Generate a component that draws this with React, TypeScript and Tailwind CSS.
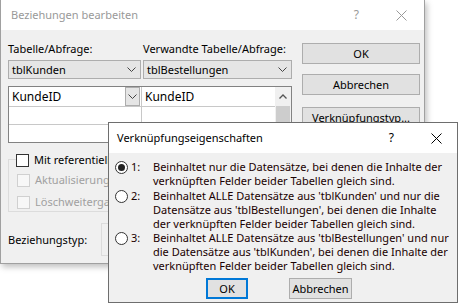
import React from "react";

const font = { fontFamily: '"Noto Sans", "Open Sans", sans-serif' };

function Chevron({ className = "" }: { className?: string }) {
  return (
    <svg width="9" height="6" viewBox="0 0 9 6" className={className}>
      <path d="M0.5 0.5 L4.5 4.5 L8.5 0.5" fill="none" stroke="#444" strokeWidth="1" />
    </svg>
  );
}

function CloseX({ color = "#000" }: { color?: string }) {
  return (
    <svg width="11" height="11" viewBox="0 0 11 11">
      <path d="M0.5 0.5 L10.5 10.5 M10.5 0.5 L0.5 10.5" stroke={color} strokeWidth="1" fill="none" />
    </svg>
  );
}

function Radio({ checked }: { checked?: boolean }) {
  return (
    <div className="w-[13px] h-[13px] rounded-full border border-[#333] bg-white flex items-center justify-center shrink-0">
      {checked && <div className="w-[7px] h-[7px] rounded-full bg-[#222]" />}
    </div>
  );
}

function Btn({ children, className = "" }: { children: React.ReactNode; className?: string }) {
  return (
    <div className={`h-[21px] border border-[#adadad] bg-[#e1e1e1] flex items-center justify-center text-black whitespace-nowrap ${className}`}>
      {children}
    </div>
  );
}

const options = [
  { n: "1:", c: true, t: ["Beinhaltet nur die Datensätze, bei denen die Inhalte der", "verknüpften Felder beider Tabellen gleich sind."] },
  { n: "2:", c: false, t: ["Beinhaltet ALLE Datensätze aus 'tblKunden' und nur die", "Datensätze aus 'tblBestellungen', bei denen die Inhalte", "der verknüpften Felder beider Tabellen gleich sind."] },
  { n: "3:", c: false, t: ["Beinhaltet ALLE Datensätze aus 'tblBestellungen' und nur", "die Datensätze aus 'tblKunden', bei denen die Inhalte der", "verknüpften Felder beider Tabellen gleich sind."] },
];

export default function App() {
  return (
    <div className="relative w-[459px] h-[303px] bg-white overflow-hidden text-[11px] leading-[14px] text-black" style={font}>
      {/* Background dialog */}
      <div className="w-[425px] h-[264px] border border-[#a0a0a0] border-t-0 bg-[#f0f0f0] shadow-[2px_3px_6px_rgba(0,0,0,0.25)] flex flex-col">
        <div className="h-[30px] bg-white flex items-center pl-[10px] pr-[17px] shrink-0">
          <span className="text-[#999] flex-1">Beziehungen bearbeiten</span>
          <span className="text-[#999] text-[12px] mr-[37px]">?</span>
          <CloseX color="#999" />
        </div>
        <div className="flex pl-[7px] pt-[12px]">
          {/* left column */}
          <div className="w-[284px] flex flex-col">
            <div className="flex h-[14px] whitespace-nowrap">
              <span className="w-[135px]">Tabelle/Abfrage:</span>
              <span>Verwandte Tabelle/Abfrage:</span>
            </div>
            <div className="flex mt-[4px] h-[19px] gap-[2px]">
              <div className="w-[133px] border border-[#adadad] bg-[#e5e5e5] flex items-center px-[3px]">
                <span className="flex-1">tblKunden</span>
                <Chevron className="mr-[1px]" />
              </div>
              <div className="w-[149px] border border-[#adadad] bg-[#e5e5e5] flex items-center px-[3px]">
                <span className="flex-1">tblBestellungen</span>
                <Chevron className="mr-[1px]" />
              </div>
            </div>
            {/* grid */}
            <div className="mt-[7px] h-[57px] border border-[#828282] bg-white flex">
              <div className="flex-1 flex flex-col">
                <div className="flex h-[20px] border-b border-[#c8c8c8]">
                  <div className="w-[133px] border-r border-[#c8c8c8] flex items-center pl-[3px] text-[12px]">
                    <span className="flex-1">KundeID</span>
                    <div className="w-[15px] h-[19px] border border-[#adadad] bg-[#e5e5e5] flex items-center justify-center mr-[1px]">
                      <Chevron />
                    </div>
                  </div>
                  <div className="flex-1 flex items-center pl-[3px] text-[12px]">KundeID</div>
                </div>
                <div className="flex h-[18px] border-b border-[#c8c8c8]">
                  <div className="w-[133px] border-r border-[#c8c8c8]" />
                  <div className="flex-1" />
                </div>
                <div className="flex-1" />
              </div>
              <div className="w-[16px] bg-[#f0f0f0] flex flex-col">
                <div className="h-[19px] flex items-center justify-center">
                  <svg width="8" height="5" viewBox="0 0 8 5">
                    <path d="M0.5 4.5 L4 1 L7.5 4.5" fill="none" stroke="#555" strokeWidth="1.3" />
                  </svg>
                </div>
                <div className="mx-[1px] flex-1 bg-[#cdcdcd]" />
              </div>
            </div>
            {/* group box */}
            <div className="relative mt-[16px] h-[53px] border border-[#dcdcdc]">
              <div className="absolute -top-[7px] left-[7px] flex items-center bg-[#f0f0f0] pr-[2px] whitespace-nowrap">
                <div className="w-[13px] h-[13px] border border-[#333] bg-white" />
                <span className="ml-[5px]">Mit referentieller Integrität</span>
              </div>
              <div className="pl-[8px] pt-[13px] flex flex-col gap-[8px] text-[#a0a0a0] whitespace-nowrap">
                <div className="flex items-center">
                  <div className="w-[13px] h-[13px] border border-[#d0d0d0] bg-[#f7f7f7]" />
                  <span className="ml-[5px]">Aktualisierungsweitergabe</span>
                </div>
                <div className="flex items-center">
                  <div className="w-[13px] h-[13px] border border-[#d0d0d0] bg-[#f7f7f7]" />
                  <span className="ml-[5px]">Löschweitergabe</span>
                </div>
              </div>
            </div>
            <div className="flex items-center mt-[11px]">
              <span className="w-[93px]">Beziehungstyp:</span>
              <div className="h-[33px] w-[120px] border border-[#dcdcdc]" />
            </div>
          </div>
          {/* right column buttons */}
          <div className="ml-[10px] w-[118px] flex flex-col gap-[10px] pt-[1px]">
            <Btn>OK</Btn>
            <Btn>Abbrechen</Btn>
            <Btn className="mt-[2px]">Verknüpfungstyp...</Btn>
          </div>
        </div>
      </div>

      {/* Foreground dialog */}
      <div className="absolute left-[108px] top-[122px] w-[350px] h-[181px] border border-[#6e6e6e] bg-[#f0f0f0] flex flex-col">
        <div className="h-[30px] bg-white flex items-center pl-[8px] pr-[15px] shrink-0">
          <span className="flex-1 text-black">Verknüpfungseigenschaften</span>
          <span className="text-[12px] mr-[37px]">?</span>
          <CloseX />
        </div>
        <div className="flex flex-col pl-[6px] pt-[7px] text-[#1a0000]">
          {options.map((r, i) => (
            <div key={r.n} className={`flex items-start ${i === 1 ? "mt-[1px]" : ""}`}>
              <div className="flex items-center h-[14px] w-[38px] shrink-0">
                <Radio checked={r.c} />
                <span className="ml-[3px]">{r.n}</span>
              </div>
              <div className="flex flex-col whitespace-nowrap">
                {r.t.map((l) => (
                  <span key={l}>{l}</span>
                ))}
              </div>
            </div>
          ))}
        </div>
        <div className="flex gap-[41px] mt-[5px] pl-[97px]">
          <div className="w-[42px] h-[21px] border-2 border-[#0078d7] bg-[#e1e1e1] flex items-center justify-center">OK</div>
          <Btn className="w-[63px]">Abbrechen</Btn>
        </div>
      </div>
    </div>
  );
}
